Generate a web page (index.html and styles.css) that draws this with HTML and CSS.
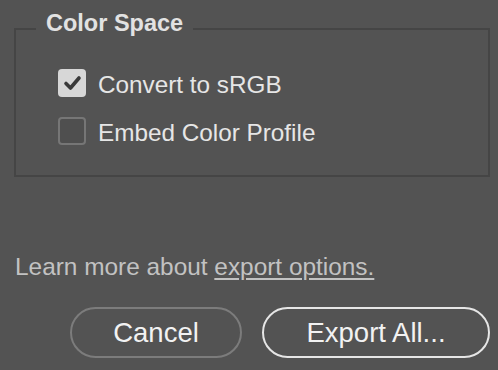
FILE: index.html
```html
<!DOCTYPE html>
<html lang="en">
<head>
<meta charset="utf-8">
<title>Export Options</title>
<link rel="stylesheet" href="styles.css">
</head>
<body>
<div class="dialog">
  <fieldset class="group">
    <legend class="group-title">Color Space</legend>
    <div class="options">
      <label class="option">
        <span class="box box-checked">
          <svg viewBox="0 0 28 28" width="28" height="28" aria-hidden="true"><path d="M8 14.5 L12.5 19 L21 9" fill="none" stroke="#3a3a3a" stroke-width="3.6" stroke-linecap="round" stroke-linejoin="round"/></svg>
        </span>
        <span class="option-text">Convert to sRGB</span>
      </label>
      <label class="option">
        <span class="box"></span>
        <span class="option-text">Embed Color Profile</span>
      </label>
    </div>
  </fieldset>
  <p class="learn">Learn more about <a class="learn-link" href="#">export options.</a></p>
  <div class="actions">
    <button class="btn btn-secondary" type="button">Cancel</button>
    <button class="btn btn-primary" type="button">Export All...</button>
  </div>
</div>
</body>
</html>
```

FILE: styles.css
```css
html, body {
  margin: 0;
  padding: 0;
  background: #535353;
}
body {
  width: 498px;
  height: 370px;
  overflow: hidden;
  font-family: "Liberation Sans", Arial, sans-serif;
  color: #e4e4e4;
}
.dialog {
  display: flex;
  flex-direction: column;
  padding: 10px 8px 0 14px;
}
.group {
  margin: 0;
  padding: 22px 0 30px 0;
  border: 2px solid #454545;
}
.group-title {
  margin-left: 20px;
  padding: 0 10px 10px 10px;
  font-size: 23.5px;
  font-weight: bold;
  color: #e2e2e2;
  line-height: 27px;
}
.options {
  display: flex;
  flex-direction: column;
  gap: 20px;
  padding-left: 42px;
}
.option {
  display: flex;
  align-items: center;
  gap: 12px;
  height: 28px;
}
.box {
  width: 28px;
  height: 28px;
  box-sizing: border-box;
  border-radius: 4px;
  border: 2px solid #767676;
  background: #4f4f4f;
  flex: none;
}
.box-checked {
  border: none;
  background: #d7d7d7;
}
.box svg {
  display: block;
}
.option-text {
  font-size: 24.3px;
  line-height: 28px;
  padding-top: 3px;
  color: #e6e6e6;
}
.learn {
  margin: 76px 0 0 1px;
  font-size: 24.4px;
  line-height: 28px;
  color: #c2c2c2;
}
.learn-link {
  color: #c2c2c2;
  text-decoration: underline;
  text-underline-offset: 3px;
}
.actions {
  display: flex;
  justify-content: flex-end;
  gap: 20px;
  margin-top: 26px;
}
.btn {
  height: 51px;
  border-radius: 26px;
  background: transparent;
  font-family: "Liberation Sans", Arial, sans-serif;
  font-size: 27.5px;
  color: #f2f2f2;
  padding: 0;
}
.btn-secondary {
  width: 172px;
  border: 2px solid #7c7c7c;
}
.btn-primary {
  width: 228px;
  border: 2px solid #e6e6e6;
}
```
